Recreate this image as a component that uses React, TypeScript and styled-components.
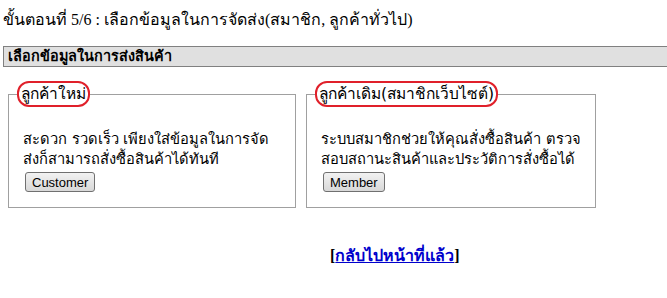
import React from "react";
import styled, { createGlobalStyle } from "styled-components";

const Global = createGlobalStyle`
  html, body { margin: 0; padding: 0; background: #fff; }
  body { font-family: "Liberation Serif", "Times New Roman", serif; color: #000; }
`;

const Page = styled.div`
  width: 667px;
  height: 298px;
  overflow: hidden;
  padding: 9px 0 0 3px;
  box-sizing: border-box;
`;

const StepTitle = styled.div`
  font-family: "Liberation Serif", serif;
  font-size: 16px;
  line-height: 22px;
  height: 22px;
`;

const SectionBar = styled.div`
  margin-top: 15px;
  height: 19px;
  background: #e0e0e0;
  border: 1px solid #808080;
  border-right: none;
  font-family: "DejaVu Sans", Tahoma, sans-serif;
  font-weight: bold;
  font-size: 14.4px;
  line-height: 19px;
  padding-left: 4px;
`;

const Cards = styled.div`
  display: flex;
  gap: 10px;
  margin-top: 14px;
  padding-left: 5px;
`;

const Card = styled.fieldset<{ $w: number }>`
  width: ${(p) => p.$w}px;
  box-sizing: border-box;
  height: 127px;
  margin: 0;
  border: 1px solid #a0a0a0;
  padding: 0 0 0 14px;
  font-family: "DejaVu Sans", Tahoma, sans-serif;
  font-size: 14.7px;
  white-space: nowrap;
`;

const Legend = styled.legend`
  margin-left: -6px;
  padding: 0 2px;
  border: 2px solid #e0202a;
  border-radius: 12px;
  font-size: 15.5px;
  line-height: 22px;
`;

const Desc = styled.p`
  margin: 22px 0 0;
  line-height: 20px;
`;

const Btn = styled.button`
  margin: 3px 0 0 2px;
  height: 20px;
  padding: 0 6px;
  font-family: "Liberation Sans", Arial, sans-serif;
  font-size: 13px;
  border: 1px solid #707070;
  border-radius: 3px;
  background: linear-gradient(#f2f2f2, #d8d8d8);
`;

const Back = styled.div`
  margin-top: 35px;
  padding-left: 327px;
  font-family: "Liberation Serif", serif;
  font-weight: bold;
  font-size: 16px;
  a { color: #0000cc; }
`;

export default function App() {
  return (
    <Page>
      <Global />
      <StepTitle>ขั้นตอนที่ 5/6 : เลือกข้อมูลในการจัดส่ง(สมาชิก, ลูกค้าทั่วไป)</StepTitle>
      <SectionBar>เลือกข้อมูลในการส่งสินค้า</SectionBar>
      <Cards>
        <Card $w={288}>
          <Legend>ลูกค้าใหม่</Legend>
          <Desc>สะดวก รวดเร็ว เพียงใส่ข้อมูลในการจัด<br />ส่งก็สามารถสั่งซื้อสินค้าได้ทันที</Desc>
          <Btn>Customer</Btn>
        </Card>
        <Card $w={290}>
          <Legend>ลูกค้าเดิม(สมาชิกเว็บไซต์)</Legend>
          <Desc>ระบบสมาชิกช่วยให้คุณสั่งซื้อสินค้า ตรวจ<br />สอบสถานะสินค้าและประวัติการสั่งซื้อได้</Desc>
          <Btn>Member</Btn>
        </Card>
      </Cards>
      <Back>[<a href="#">กลับไปหน้าที่แล้ว</a>]</Back>
    </Page>
  );
}
